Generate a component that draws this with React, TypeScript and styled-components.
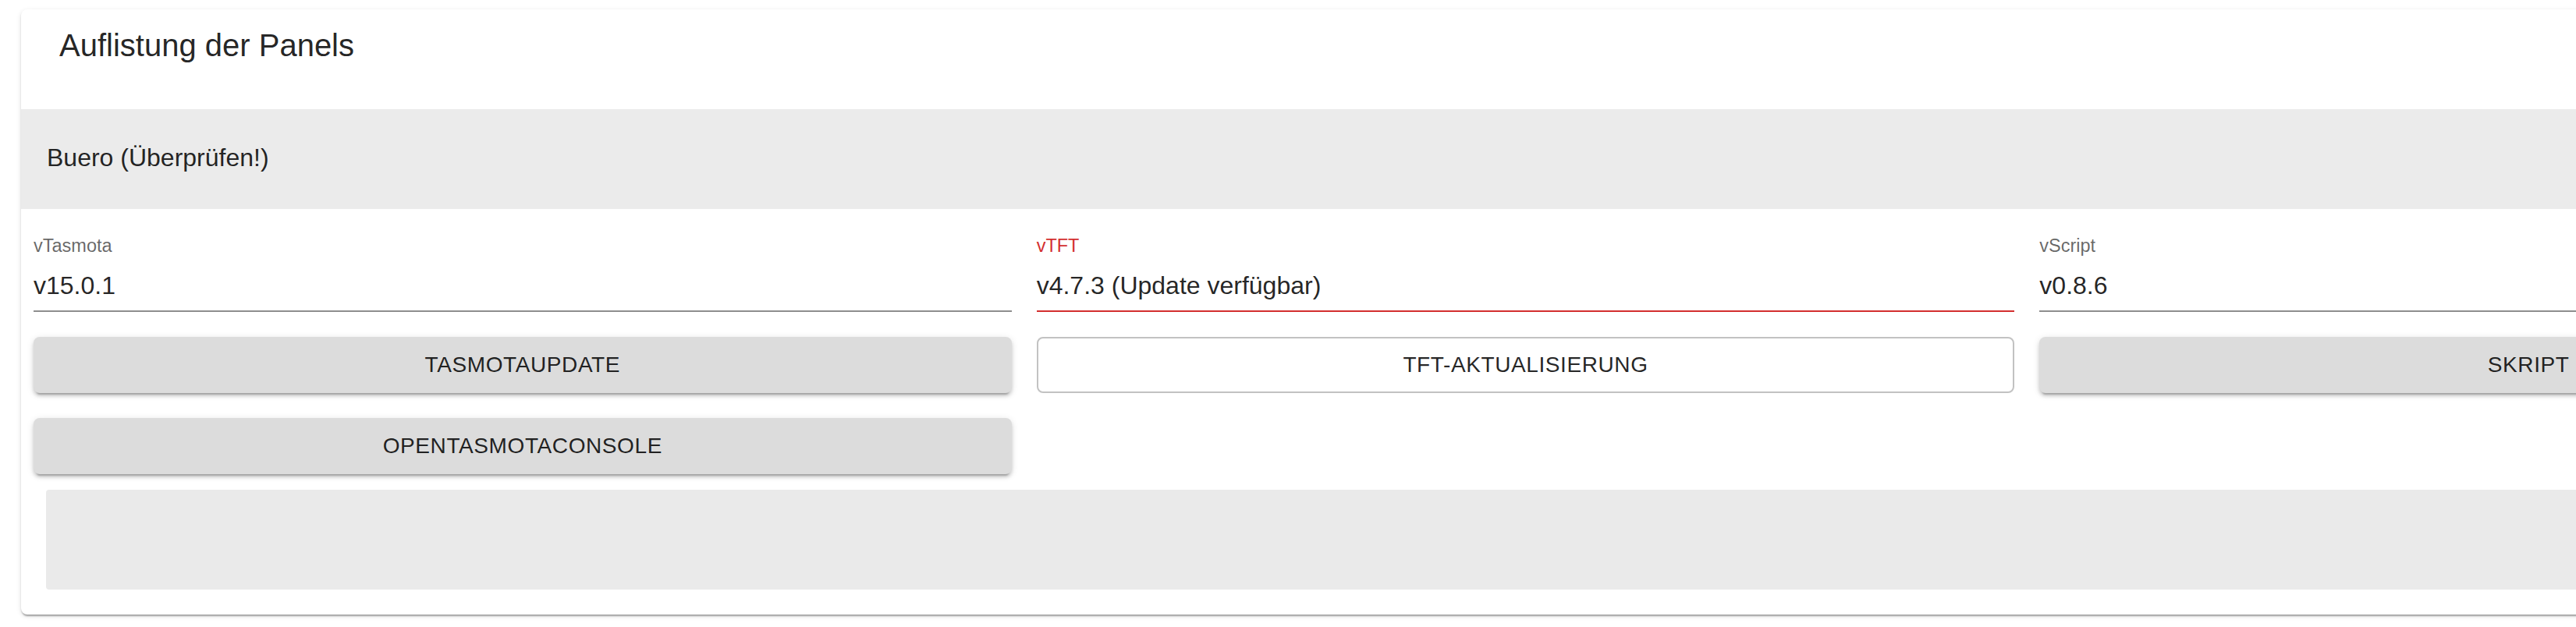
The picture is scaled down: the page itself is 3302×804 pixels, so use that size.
import { styled, createGlobalStyle } from 'styled-components';

const GlobalStyle = createGlobalStyle`
  html, body {
    margin: 0;
    padding: 0;
    width: 3302px;
    height: 804px;
    overflow: hidden;
    background: #ffffff;
  }

  body {
    font-family: 'Liberation Sans', Arial, Helvetica, sans-serif;
    color: rgba(0, 0, 0, 0.87);
  }
`;

const SPage = styled.div`
  padding: 12px 0 0 27px;
`;

const SCard = styled.section`
  width: 3857px;
  padding-bottom: 32px;
  background: #ffffff;
  border-radius: 8px;
  box-shadow:
    0 4px 2px -2px rgba(0, 0, 0, 0.2),
    0 2px 2px 0 rgba(0, 0, 0, 0.14),
    0 2px 6px 0 rgba(0, 0, 0, 0.12);
  overflow: hidden;
`;

const STitle = styled.h2`
  box-sizing: border-box;
  height: 128px;
  margin: 0;
  padding: 22px 0 0 49px;
  font-size: 40px;
  font-weight: 400;
  line-height: 48px;
  color: rgba(0, 0, 0, 0.87);
`;

const SPanelHeader = styled.div`
  box-sizing: border-box;
  height: 128px;
  padding: 46px 0 0 33px;
  background: #ebebeb;
  font-size: 32px;
  line-height: 32px;
  color: rgba(0, 0, 0, 0.87);
`;

const SGrid = styled.div`
  display: grid;
  grid-template-columns: repeat(3, 1fr);
  column-gap: 32px;
  row-gap: 32px;
  padding: 36px 16px 0;
`;

const SField = styled.div<{ $error?: boolean }>`
  display: flex;
  flex-direction: column;
  padding-bottom: 16px;
  border-bottom: 2px solid ${({ $error }) => ($error ? '#d32f2f' : '#8e8e8e')};
`;

const SLabel = styled.label<{ $error?: boolean }>`
  font-size: 23.5px;
  line-height: 23.5px;
  color: ${({ $error }) => ($error ? '#d32f2f' : 'rgba(0, 0, 0, 0.6)')};
`;

const SValue = styled.div`
  margin-top: 22px;
  font-size: 32px;
  line-height: 32px;
  color: rgba(0, 0, 0, 0.87);
`;

const SButton = styled.button<{ $variant?: 'contained' | 'outlined' }>`
  box-sizing: border-box;
  height: 72px;
  padding: 0 32px;
  font-family: inherit;
  font-size: 28px;
  font-weight: 400;
  line-height: 49px;
  letter-spacing: 0.6px;
  text-transform: uppercase;
  color: rgba(0, 0, 0, 0.87);
  border-radius: 8px;
  cursor: pointer;
  background: ${({ $variant }) => ($variant === 'outlined' ? '#ffffff' : '#dcdcdc')};
  border: ${({ $variant }) => ($variant === 'outlined' ? '2px solid #c2c2c2' : 'none')};
  box-shadow: ${({ $variant }) =>
    $variant === 'outlined'
      ? 'none'
      : '0 6px 2px -4px rgba(0,0,0,0.2), 0 4px 4px 0 rgba(0,0,0,0.14), 0 2px 10px 0 rgba(0,0,0,0.12)'};
`;

const SLogBox = styled.div`
  height: 128px;
  margin: 20px 32px 0;
  background: #eaeaea;
  border-radius: 4px;
`;

const fields = [
  { label: 'vTasmota', value: 'v15.0.1' },
  { label: 'vTFT', value: 'v4.7.3 (Update verfügbar)', error: true },
  { label: 'vScript', value: 'v0.8.6' },
];

const App = () => (
  <>
    <GlobalStyle />
    <SPage>
      <SCard>
        <STitle>Auflistung der Panels</STitle>
        <SPanelHeader>Buero (Überprüfen!)</SPanelHeader>
        <SGrid>
          {fields.map((field) => (
            <SField key={field.label} $error={field.error}>
              <SLabel $error={field.error}>{field.label}</SLabel>
              <SValue>{field.value}</SValue>
            </SField>
          ))}
          <SButton>TasmotaUpdate</SButton>
          <SButton $variant='outlined'>TFT-Aktualisierung</SButton>
          <SButton>Skript</SButton>
          <SButton>OpenTasmotaConsole</SButton>
        </SGrid>
        <SLogBox />
      </SCard>
    </SPage>
  </>
);

export default App;
